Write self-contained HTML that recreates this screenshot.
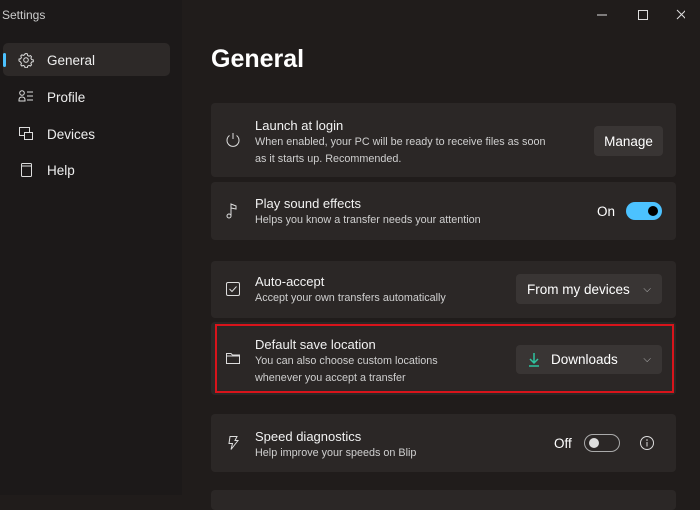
<!DOCTYPE html>
<html><head><style>
*{box-sizing:border-box;margin:0;padding:0}
body{width:700px;height:495px;overflow:hidden;background:#201c1b;font-family:"Liberation Sans",sans-serif;color:#fff;position:relative}
.side{position:absolute;left:0;top:0;width:182px;height:495px;background:#1c1919}
.title{position:absolute;left:2px;top:8px;font-size:12px;color:#ccc}
.nav{position:absolute;left:3px;width:167px;height:33px;display:flex;align-items:center;font-size:13.5px;color:#eee}
.nav svg{position:absolute;left:15px}
.nav span{position:absolute;left:44px;top:10px}
.sel{background:#2d2928;border-radius:5px}
.sel:before{content:"";position:absolute;left:0;top:10px;width:3px;height:14px;background:#4cc2ff;border-radius:2px}
h1{position:absolute;left:211px;top:45px;font-size:25px;font-weight:bold}
.card{position:absolute;left:211px;width:465px;background:#2b2726;border-radius:4px}
.card .ic{position:absolute;left:14px}
.t{position:absolute;left:44px;font-size:13px;color:#f2f2f2}
.d{position:absolute;left:44px;font-size:10.8px;color:#cfcfcf;line-height:17px}
.btn{position:absolute;background:#393534;border-radius:4px;font-size:13.5px;display:flex;align-items:center}
.tw{position:absolute;width:36px;height:18px;border-radius:9px}
</style></head><body>
<div class="side"></div>
<div class="title">Settings</div>
<svg style="position:absolute;left:595px;top:8px" width="90" height="14"><line x1="2" y1="7" x2="12" y2="7" stroke="#ddd"/><rect x="43.5" y="2.5" width="9" height="9" fill="none" stroke="#ddd"/><path d="M82 2l9 9M91 2l-9 9" stroke="#ddd"/></svg>
<div class="nav sel" style="top:43px"><svg width="16" height="16" viewBox="0 0 16 16"><circle cx="8" cy="8" r="2.3" fill="none" stroke="#ddd"/><path d="M8 1.5l1.3.3.3 1.6 1.4.8 1.5-.6 1 1.1-.6 1.5.8 1.4 1.6.3v1.8l-1.6.3-.8 1.4.6 1.5-1 1.1-1.5-.6-1.4.8-.3 1.6H7l-.3-1.6-1.4-.8-1.5.6-1-1.1.6-1.5-.8-1.4L1 8.9V7.1l1.6-.3.8-1.4-.6-1.5 1-1.1 1.5.6 1.4-.8L7 1.8z" fill="none" stroke="#ddd"/></svg><span>General</span></div>
<div class="nav" style="top:80px"><svg width="16" height="16"><circle cx="4" cy="4" r="2.3" fill="none" stroke="#ddd"/><path d="M1 11q0-3 3-3t3 3v1H1z" fill="none" stroke="#ddd"/><path d="M9 3h6M9 7h6M9 11h6" stroke="#ddd"/></svg><span>Profile</span></div>
<div class="nav" style="top:117px"><svg width="16" height="16"><rect x="1.5" y="1.5" width="10" height="8" fill="none" stroke="#ddd"/><rect x="6.5" y="6.5" width="8" height="7" fill="#1c1919" stroke="#ddd"/></svg><span>Devices</span></div>
<div class="nav" style="top:153px"><svg width="16" height="16"><rect x="3.5" y="1.5" width="10" height="13" rx="1" fill="none" stroke="#ddd"/><line x1="3.5" y1="4" x2="13.5" y2="4" stroke="#ddd"/></svg><span>Help</span></div>
<h1>General</h1>

<div class="card" style="top:103px;height:74px">
<svg class="ic" style="top:29px" width="16" height="16"><path d="M4.5 3.5a6 6 0 1 0 7 0" fill="none" stroke="#ddd"/><line x1="8" y1="1" x2="8" y2="7" stroke="#ddd"/></svg>
<div class="t" style="top:15px">Launch at login</div>
<div class="d" style="top:31px">When enabled, your PC will be ready to receive files as soon<br>as it starts up. Recommended.</div>
<div class="btn" style="left:383px;top:23px;width:69px;height:30px;justify-content:center">Manage</div></div>

<div class="card" style="top:182px;height:58px">
<svg class="ic" style="top:20px" width="16" height="18"><circle cx="4" cy="14" r="2" fill="none" stroke="#ddd"/><path d="M6 14V2l5 2v3l-5-1" fill="none" stroke="#ddd"/></svg>
<div class="t" style="top:14px">Play sound effects</div>
<div class="d" style="top:30px">Helps you know a transfer needs your attention</div>
<div style="position:absolute;left:386px;top:22px;font-size:13.5px">On</div>
<div class="tw" style="left:415px;top:20px;background:#4cc2ff"><div style="position:absolute;right:4px;top:4px;width:10px;height:10px;border-radius:5px;background:#000"></div></div></div>

<div class="card" style="top:261px;height:57px">
<svg class="ic" style="top:20px" width="16" height="16"><rect x="1.5" y="1.5" width="13" height="13" rx="1.5" fill="none" stroke="#ddd"/><path d="M4.5 8l2.5 2.5 4.5-5" fill="none" stroke="#ddd"/></svg>
<div class="t" style="top:13px">Auto-accept</div>
<div class="d" style="top:29px">Accept your own transfers automatically</div>
<div class="btn" style="left:305px;top:13px;width:146px;height:30px;padding-left:11px">From my devices<span style="position:absolute;right:11px;font-size:10px;color:#bbb">⌵</span></div></div>

<div class="card" style="top:322px;height:73px">
<svg class="ic" style="top:29px" width="16" height="14"><path d="M1.5 2.5h4.5l1.5 1.5h7v8.5h-13z M1.5 5h13" fill="none" stroke="#ddd"/></svg>
<div class="t" style="top:15px">Default save location</div>
<div class="d" style="top:31px">You can also choose custom locations<br>whenever you accept a transfer</div>
<div class="btn" style="left:305px;top:23px;width:146px;height:29px;padding-left:35px">Downloads<span style="position:absolute;right:11px;font-size:10px;color:#bbb">⌵</span>
<svg style="position:absolute;left:12px;top:7px" width="12" height="16"><path d="M6 1v10M2 7l4 4 4-4M1 14h10" fill="none" stroke="#2ec4a0" stroke-width="1.5"/></svg></div></div>
<div style="position:absolute;left:215px;top:324px;width:459px;height:69px;border:2px solid #d8141b"></div>

<div class="card" style="top:414px;height:58px">
<svg class="ic" style="top:21px" width="16" height="16"><path d="M5 1.5h7l-2 4h3l-7 9 1.5-6h-3.5z" fill="none" stroke="#ddd"/></svg>
<div class="t" style="top:15px">Speed diagnostics</div>
<div class="d" style="top:31px">Help improve your speeds on Blip</div>
<div style="position:absolute;left:343px;top:22px;font-size:13.5px">Off</div>
<div class="tw" style="left:373px;top:20px;border:1px solid #aaa"><div style="position:absolute;left:4px;top:3px;width:10px;height:10px;border-radius:5px;background:#ddd"></div></div>
<svg style="position:absolute;left:428px;top:21px" width="16" height="16"><circle cx="8" cy="8" r="6.5" fill="none" stroke="#ddd"/><path d="M8 7v4.5" stroke="#ddd"/><circle cx="8" cy="5" r=".8" fill="#ddd"/></svg></div>

<div class="card" style="top:490px;height:20px"></div>
</body></html>
